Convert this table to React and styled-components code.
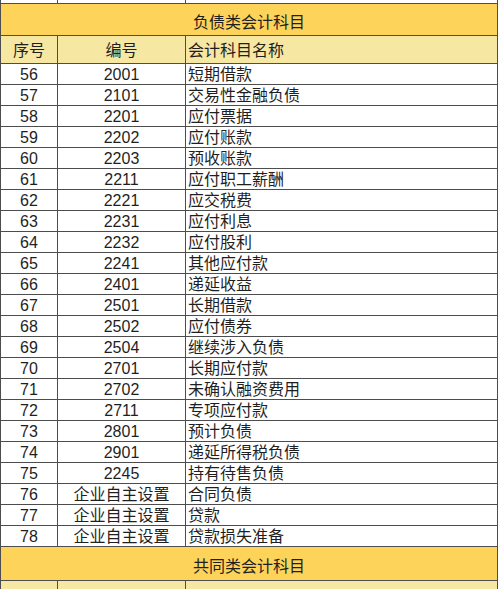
import React from 'react';
import styled, { createGlobalStyle } from 'styled-components';

const Global = createGlobalStyle`
    body {
        margin: 0;
        background: #ffffff;
        font-family: "Liberation Sans", "Noto Sans CJK SC", sans-serif;
    }
`;

const Sheet = styled.table`
    border-collapse: collapse;
    table-layout: fixed;
    width: 497px;
    color: #1f1f1f;
    font-size: 16px;
`;

// rows are 20px in all: 18px of content plus 2px of top padding
const Cell = styled.td`
    border: 1px solid #4d4d4d;
    height: ${p => (p.h || 20) - 2}px;
    padding: 2px 0 0 ${p => p.left ? 2 : 0}px;
    text-align: ${p => p.left ? 'left' : 'center'};
    line-height: 1;
    white-space: nowrap;
    overflow: hidden;
    background: ${p => p.bg || '#ffffff'};
`;

const Edge = styled.td`
    border: 1px solid #4d4d4d;
    border-top: none;
    height: 3px;
    padding: 0;
`;

const Title = styled.td`
    border: 1px solid #4d4d4d;
    height: ${p => p.h - 2}px;
    background: #fdd35a;
    text-align: center;
    font-size: 16px;
    padding: 2px 0 0;
`;

const HEAD_BG = '#f6e7a2';

const rows = [
    [56, '2001', '短期借款'],
    [57, '2101', '交易性金融负债'],
    [58, '2201', '应付票据'],
    [59, '2202', '应付账款'],
    [60, '2203', '预收账款'],
    [61, '2211', '应付职工薪酬'],
    [62, '2221', '应交税费'],
    [63, '2231', '应付利息'],
    [64, '2232', '应付股利'],
    [65, '2241', '其他应付款'],
    [66, '2401', '递延收益'],
    [67, '2501', '长期借款'],
    [68, '2502', '应付债券'],
    [69, '2504', '继续涉入负债'],
    [70, '2701', '长期应付款'],
    [71, '2702', '未确认融资费用'],
    [72, '2711', '专项应付款'],
    [73, '2801', '预计负债'],
    [74, '2901', '递延所得税负债'],
    [75, '2245', '持有待售负债'],
    [76, '企业自主设置', '合同负债'],
    [77, '企业自主设置', '贷款'],
    [78, '企业自主设置', '贷款损失准备'],
];

export default function App()
{
    return (
        <>
            <Global />
            <Sheet>
                <colgroup>
                    <col style={{ width: 57 }} />
                    <col style={{ width: 128 }} />
                    <col style={{ width: 312 }} />
                </colgroup>
                <tbody>
                    <tr><Edge /><Edge /><Edge /></tr>
                    <tr><Title colSpan={3} h={31}>负债类会计科目</Title></tr>
                    <tr>
                        <Cell h={27} bg={HEAD_BG}>序号</Cell>
                        <Cell h={27} bg={HEAD_BG}>编号</Cell>
                        <Cell h={27} bg={HEAD_BG} left>会计科目名称</Cell>
                    </tr>
                    {
                        rows.map(r => <tr key={r[0]}>
                            <Cell>{r[0]}</Cell>
                            <Cell>{r[1]}</Cell>
                            <Cell left>{r[2]}</Cell>
                        </tr>)
                    }
                    <tr><Title colSpan={3} h={33}>共同类会计科目</Title></tr>
                    <tr>
                        <Cell h={20} bg={HEAD_BG} />
                        <Cell h={20} bg={HEAD_BG} />
                        <Cell h={20} bg={HEAD_BG} />
                    </tr>
                </tbody>
            </Sheet>
        </>
    );
}
